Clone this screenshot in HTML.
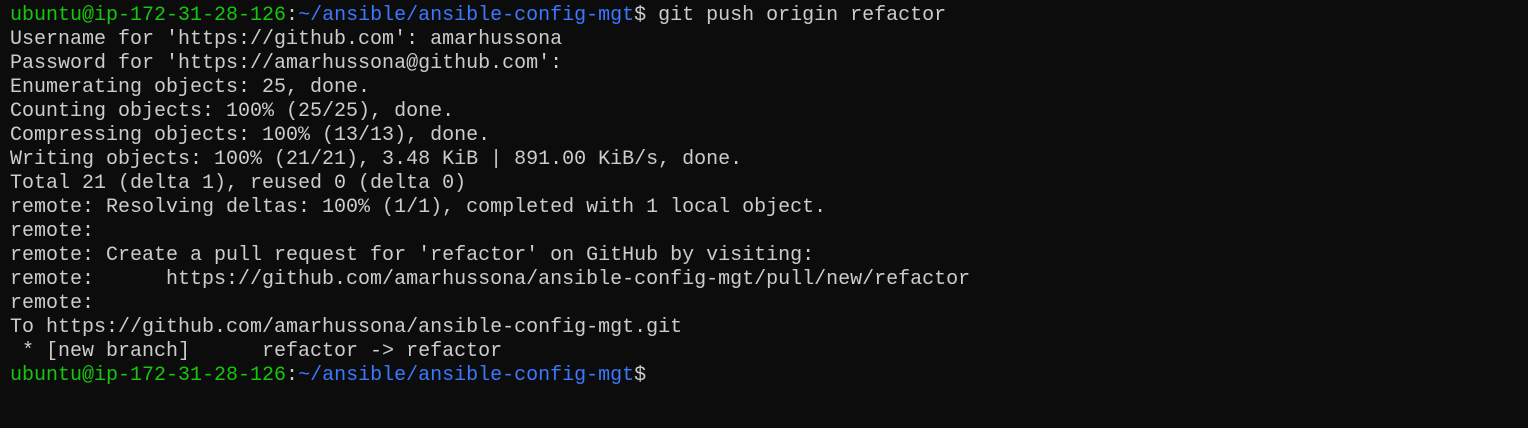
<!DOCTYPE html>
<html><head><meta charset="utf-8"><style>
html,body{margin:0;padding:0;background:#0c0c0c;width:1528px;height:428px;overflow:hidden}
pre{margin:0;padding:4px 0 0 10px;font-family:"Liberation Mono","DejaVu Sans Mono",monospace;font-size:20px;line-height:24px;color:#cccccc;white-space:pre}
.g{color:#16c60c}.b{color:#3b78ff}
</style></head><body><pre><span class="g">ubuntu@ip-172-31-28-126</span>:<span class="b">~/ansible/ansible-config-mgt</span>$ git push origin refactor
Username for 'https://github.com': amarhussona
Password for 'https://amarhussona@github.com':
Enumerating objects: 25, done.
Counting objects: 100% (25/25), done.
Compressing objects: 100% (13/13), done.
Writing objects: 100% (21/21), 3.48 KiB | 891.00 KiB/s, done.
Total 21 (delta 1), reused 0 (delta 0)
remote: Resolving deltas: 100% (1/1), completed with 1 local object.
remote:
remote: Create a pull request for 'refactor' on GitHub by visiting:
remote:      https://github.com/amarhussona/ansible-config-mgt/pull/new/refactor
remote:
To https://github.com/amarhussona/ansible-config-mgt.git
 * [new branch]      refactor -&gt; refactor
<span class="g">ubuntu@ip-172-31-28-126</span>:<span class="b">~/ansible/ansible-config-mgt</span>$</pre></body></html>
